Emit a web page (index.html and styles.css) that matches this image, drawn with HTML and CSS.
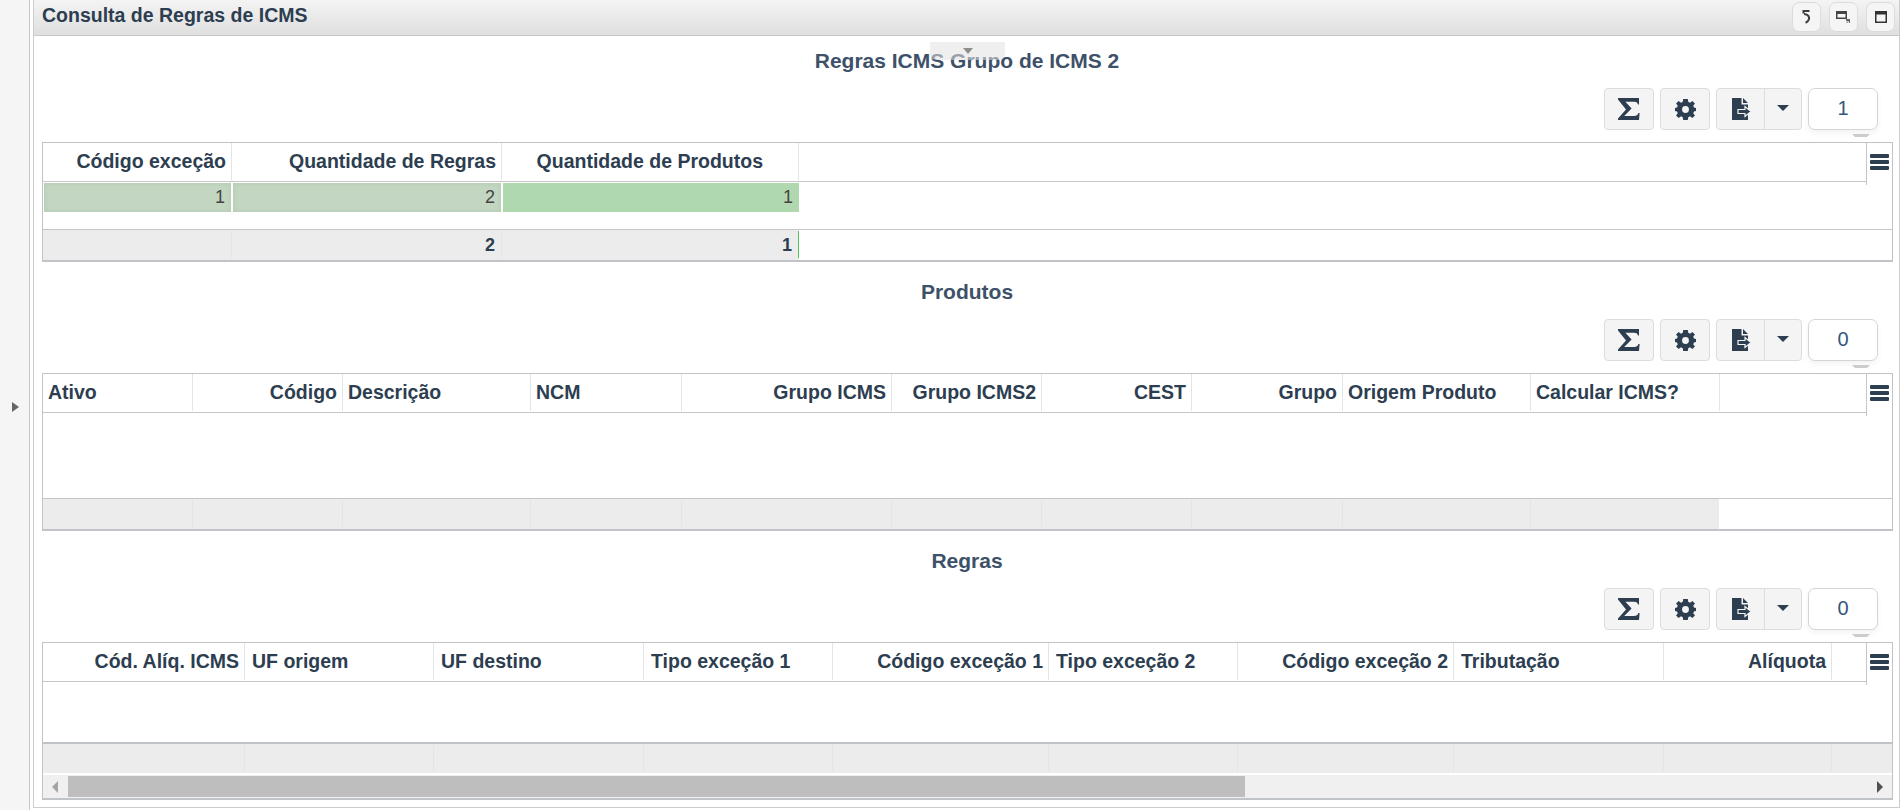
FILE: index.html
```html
<!DOCTYPE html>
<html lang="pt-BR">
<head>
<meta charset="utf-8">
<title>Consulta de Regras de ICMS</title>
<link rel="stylesheet" href="styles.css">
</head>
<body>
<svg class="defs" width="0" height="0" aria-hidden="true">
  <symbol id="i-sigma" viewBox="0 0 22 22"><path d="M0 0H21V6.5H20C19.4 4.4 18.4 3.8 16 3.8H7.4L13.6 10.4L6.2 18H16.2C18.6 18 19.6 17.2 20.4 15H21.6L21 22H0V20.4L8 11.6L0 1.6Z"/></symbol>
  <symbol id="i-gear" viewBox="0 0 22 22"><path fill-rule="evenodd" d="M8.6 0H13.4L13.9 3L15.7 3.8L18.2 2L20.9 4.8L19.1 7.2L19.9 9L22 9.4V12.6L19.9 13L19.1 14.8L20.9 17.2L18.2 20L15.7 18.2L13.9 19L13.4 22H8.6L8.1 19L6.3 18.2L3.8 20L1.1 17.2L2.9 14.8L2.1 13L0 12.6V9.4L2.1 9L2.9 7.2L1.1 4.8L3.8 2L6.3 3.8L8.1 3ZM11 7.4A3.6 3.6 0 1 0 11 14.6A3.6 3.6 0 1 0 11 7.4Z"/></symbol>
  <symbol id="i-export" viewBox="0 0 20 22"><path d="M0 0H9.5V6.5H16V22H0ZM11 0L16 5H11Z"/><path d="M6 11.5H13V8.5L19 13.5L13 18.5V15.5H6Z" stroke="#f4f4f4" stroke-width="1.2"/></symbol>
  <symbol id="i-caret" viewBox="0 0 12 6"><path d="M0 0H12L6 6Z"/></symbol>
  <symbol id="i-menu" viewBox="0 0 19 16"><path d="M1 0H18Q19 0 19 1V3Q19 4 18 4H1Q0 4 0 3V1Q0 0 1 0ZM1 6H18Q19 6 19 7V9Q19 10 18 10H1Q0 10 0 9V7Q0 6 1 6ZM1 12H18Q19 12 19 13V15Q19 16 18 16H1Q0 16 0 15V13Q0 12 1 12Z"/></symbol>
</svg>

<aside class="rail"><span class="rail-arrow"></span></aside>

<main class="panel">
  <header class="panel-head">
    <h1 class="panel-title">Consulta de Regras de ICMS</h1>
    <div class="win-btns">
      <button class="win-btn" aria-label="Voltar">
        <svg width="9" height="14" viewBox="0 0 9 14"><path d="M7.5 1H1.5V3.5M2 4C6.6 4 8 7.6 6.6 10C5.9 11.2 5 12.2 3.5 12.8" fill="none" stroke="#3c3c3c" stroke-width="2"/></svg>
      </button>
      <button class="win-btn" aria-label="Restaurar">
        <svg width="15" height="13" viewBox="0 0 15 13"><path d="M0 0H11V8H0ZM1.5 3V6.5H9.5V3Z" fill-rule="evenodd" fill="#444"/><path d="M10 8H14V12H13V10L11 12H10L12 10H10Z" fill="#666"/></svg>
      </button>
      <button class="win-btn" aria-label="Maximizar">
        <svg width="12" height="12" viewBox="0 0 12 12"><path d="M0 0H12V12H0ZM1.5 3.5V10.5H10.5V3.5Z" fill-rule="evenodd" fill="#333"/></svg>
      </button>
    </div>
  </header>

  <div class="panel-tab"><span class="panel-tab-caret"></span></div>

  <section class="section">
    <h2 class="section-title">Regras ICMS Grupo de ICMS 2</h2>
    <div class="toolbar">
      <button class="tool"><svg class="ico ico-sigma"><use href="#i-sigma"/></svg></button>
      <button class="tool"><svg class="ico ico-gear"><use href="#i-gear"/></svg></button>
      <div class="split">
        <button class="split-main"><svg class="ico ico-export"><use href="#i-export"/></svg></button>
        <button class="split-caret"><svg class="ico ico-caret"><use href="#i-caret"/></svg></button>
      </div>
      <div class="count">1<span class="count-notch"></span></div>
    </div>
    <div class="grid">
      <div class="row head cols-a">
        <div class="cell num">Código exceção</div>
        <div class="cell num">Quantidade de Regras</div>
        <div class="cell num cell-sorted">Quantidade de Produtos</div>
        <div class="cell"></div>
      </div>
      <div class="menu"><svg class="ico ico-menu"><use href="#i-menu"/></svg></div>
      <div class="body body-a">
        <div class="row data cols-a">
          <div class="bar bar-muted">1</div>
          <div class="bar bar-muted">2</div>
          <div class="bar bar-green">1</div>
        </div>
      </div>
      <div class="row foot foot-open cols-a">
        <div class="cell num"></div>
        <div class="cell num">2</div>
        <div class="cell num foot-mark">1</div>
      </div>
    </div>
  </section>

  <section class="section">
    <h2 class="section-title">Produtos</h2>
    <div class="toolbar">
      <button class="tool"><svg class="ico ico-sigma"><use href="#i-sigma"/></svg></button>
      <button class="tool"><svg class="ico ico-gear"><use href="#i-gear"/></svg></button>
      <div class="split">
        <button class="split-main"><svg class="ico ico-export"><use href="#i-export"/></svg></button>
        <button class="split-caret"><svg class="ico ico-caret"><use href="#i-caret"/></svg></button>
      </div>
      <div class="count">0<span class="count-notch"></span></div>
    </div>
    <div class="grid">
      <div class="row head cols-b">
        <div class="cell">Ativo</div>
        <div class="cell num">Código</div>
        <div class="cell">Descrição</div>
        <div class="cell">NCM</div>
        <div class="cell num">Grupo ICMS</div>
        <div class="cell num">Grupo ICMS2</div>
        <div class="cell num">CEST</div>
        <div class="cell num">Grupo</div>
        <div class="cell">Origem Produto</div>
        <div class="cell">Calcular ICMS?</div>
        <div class="cell"></div>
      </div>
      <div class="menu"><svg class="ico ico-menu"><use href="#i-menu"/></svg></div>
      <div class="body body-b"></div>
      <div class="row foot foot-open cols-b">
        <div class="cell"></div><div class="cell"></div><div class="cell"></div>
        <div class="cell"></div><div class="cell"></div><div class="cell"></div>
        <div class="cell"></div><div class="cell"></div><div class="cell"></div>
        <div class="cell"></div>
      </div>
    </div>
  </section>

  <section class="section">
    <h2 class="section-title">Regras</h2>
    <div class="toolbar">
      <button class="tool"><svg class="ico ico-sigma"><use href="#i-sigma"/></svg></button>
      <button class="tool"><svg class="ico ico-gear"><use href="#i-gear"/></svg></button>
      <div class="split">
        <button class="split-main"><svg class="ico ico-export"><use href="#i-export"/></svg></button>
        <button class="split-caret"><svg class="ico ico-caret"><use href="#i-caret"/></svg></button>
      </div>
      <div class="count">0<span class="count-notch"></span></div>
    </div>
    <div class="grid">
      <div class="row head cols-c">
        <div class="cell num">Cód. Alíq. ICMS</div>
        <div class="cell">UF origem</div>
        <div class="cell">UF destino</div>
        <div class="cell">Tipo exceção 1</div>
        <div class="cell num">Código exceção 1</div>
        <div class="cell">Tipo exceção 2</div>
        <div class="cell num">Código exceção 2</div>
        <div class="cell">Tributação</div>
        <div class="cell num">Alíquota</div>
        <div class="cell"></div>
      </div>
      <div class="menu"><svg class="ico ico-menu"><use href="#i-menu"/></svg></div>
      <div class="body body-c"></div>
      <div class="row foot cols-c">
        <div class="cell"></div><div class="cell"></div><div class="cell"></div>
        <div class="cell"></div><div class="cell"></div><div class="cell"></div>
        <div class="cell"></div><div class="cell"></div><div class="cell"></div>
        <div class="cell"></div>
      </div>
      <div class="hscroll">
        <span class="hs-left"></span>
        <span class="hs-thumb"></span>
        <span class="hs-right"></span>
      </div>
    </div>
  </section>
</main>
</body>
</html>
```

FILE: styles.css
```css
* { box-sizing: border-box; }

html, body {
  margin: 0;
  height: 810px;
  overflow: hidden;
}

body {
  display: flex;
  background: #fff;
  font-family: "Liberation Sans", Arial, sans-serif;
  color: #2c3e50;
}

.defs { position: absolute; }

.rail {
  width: 30px;
  flex: none;
  background: #f5f5f5;
  border-right: 1px solid #c8c8c8;
  position: relative;
}

.rail-arrow {
  position: absolute;
  left: 12px;
  top: 402px;
  border-left: 7px solid #666;
  border-top: 5px solid transparent;
  border-bottom: 5px solid transparent;
}

.panel {
  position: relative;
  flex: none;
  width: 1867px;
  height: 808px;
  margin-left: 3px;
  border: 1px solid #ccc;
  border-top: 0;
}

.panel-head {
  height: 36px;
  display: flex;
  align-items: flex-start;
  justify-content: space-between;
  padding: 2px 4px 0 8px;
  background: linear-gradient(#f5f4f5, #dfdfdf);
  border-bottom: 1px solid #c8c8c8;
}

.panel-title {
  margin: 0;
  font-size: 19.5px;
  line-height: 26px;
  font-weight: 700;
  color: #2c3e50;
}

.win-btns { display: flex; gap: 8px; }

.win-btn {
  width: 29px;
  height: 30px;
  padding: 0;
  display: flex;
  align-items: center;
  justify-content: center;
  background: #f5f5f5;
  border: 1px solid #dcdcdc;
  border-radius: 7px;
}

.panel-tab {
  position: absolute;
  left: 896px;
  top: 42px;
  width: 75px;
  height: 18px;
  background: rgba(225, 225, 225, .55);
  border-radius: 0 0 6px 6px;
  display: flex;
  justify-content: center;
  padding-top: 6px;
}

.panel-tab-caret {
  width: 0;
  height: 0;
  border-top: 6px solid #8e8e8e;
  border-left: 5px solid transparent;
  border-right: 5px solid transparent;
}

.section { padding: 0 7px 5px 8px; }

.section-title {
  margin: 0;
  height: 52px;
  padding-bottom: 2px;
  display: flex;
  align-items: center;
  justify-content: center;
  font-size: 21px;
  font-weight: 700;
  color: #3d5168;
}

.toolbar {
  height: 42px;
  display: flex;
  justify-content: flex-end;
  gap: 6px;
  padding-right: 14px;
  margin-bottom: 12px;
}

.tool, .split {
  height: 42px;
  background: #f4f4f4;
  border: 1px solid #dcdcdc;
  border-radius: 4px;
}

.tool {
  width: 50px;
  padding: 0;
  display: flex;
  align-items: center;
  justify-content: center;
}

.split { display: flex; width: 86px; }

.split-main, .split-caret {
  padding: 0;
  border: 0;
  background: none;
  display: flex;
  align-items: center;
  justify-content: center;
}

.split-main { width: 48px; border-right: 1px solid #dcdcdc; }
.split-caret { flex: 1; }

.ico { fill: #2c3e50; display: block; }
.ico-sigma { width: 22px; height: 22px; }
.ico-gear { width: 21px; height: 21px; }
.ico-export { width: 20px; height: 22px; margin-left: 2px; }
.ico-caret { width: 12px; height: 6px; margin-top: -2px; }
.ico-menu { width: 19px; height: 16px; }

.count {
  position: relative;
  width: 70px;
  height: 42px;
  background: #fff;
  border: 1px solid #d5d5d5;
  border-radius: 7px;
  box-shadow: 0 3px 6px rgba(0, 0, 0, .05);
  display: flex;
  align-items: center;
  justify-content: center;
  font-size: 20px;
  color: #34577a;
  padding-bottom: 2px;
}

.count-notch {
  position: absolute;
  left: 43px;
  top: 45px;
  width: 18px;
  height: 0;
  border-top: 3px solid #ccc;
  border-left: 3px solid transparent;
  border-right: 3px solid transparent;
}

.grid {
  position: relative;
  border: 1px solid #c0c4c8;
  border-bottom: 2px solid #c0c4c8;
  width: 1851px;
}

.row { display: grid; }

.cols-a { grid-template-columns: 189px 270px 297px 1fr; }
.cols-b { grid-template-columns: 150px 150px 188px 151px 210px 150px 150px 151px 188px 189px 1fr; }
.cols-c { grid-template-columns: 202px 189px 210px 189px 216px 189px 216px 210px 168px 1fr; }

.head {
  height: 39px;
  border-bottom: 1px solid #c6c6c6;
  font-size: 19.5px;
  font-weight: 700;
  line-height: 37px;
}

.cell {
  padding: 0 5px;
  white-space: nowrap;
  overflow: hidden;
  border-right: 1px solid #e1e4e8;
  margin-bottom: 1px;
}

.cols-c .cell { padding-left: 7px; }

.cell-sorted { padding-right: 35px; }

.num { text-align: right; }

.menu {
  position: absolute;
  right: 0;
  top: 0;
  width: 26px;
  height: 42px;
  padding: 11px 0 0 3px;
  background: #fff;
  border-left: 1px solid #c6c6c6;
}

.body-a { height: 47px; padding-top: 1px; }
.body-b { height: 85px; }
.body-c { height: 60px; }

.data { height: 28px; }

.bar {
  padding: 0 6px 0 0;
  margin-left: 1px;
  margin-right: 1px;
  text-align: right;
  font-size: 18px;
  line-height: 29px;
  color: #444;
}

.bar-muted {
  background: #c3d6c1;
  box-shadow: inset 0 0 5px #b0c9ae;
}

.bar-green { background: #b0d8af; margin-right: 0; }

.foot {
  height: 31px;
  border-top: 2px solid #c0c4c8;
  background: #ececec;
  font-size: 18px;
  font-weight: 700;
  line-height: 29px;
}

.foot .cell { margin-bottom: 2px; margin-top: 1px; padding-right: 6px; }

.foot-open {
  background: linear-gradient(#ececec, #ececec) no-repeat left / 756px 100%;
  border-top: 1px solid #c6c6c6;
}

.cols-b.foot-open { background-size: 1676px 100%; }

.foot-mark { border-right-color: #53c653; }

.foot .cell:last-child:empty { border-right: 0; }

.hscroll {
  height: 25px;
  display: flex;
  align-items: center;
  background: #f0f0f0;
  border-top: 2px solid #fff;
  position: relative;
}

.hs-left {
  margin-left: 9px;
  border-right: 6px solid #a4a4a4;
  border-top: 6px solid transparent;
  border-bottom: 6px solid transparent;
}

.hs-thumb {
  margin-left: 10px;
  width: 1177px;
  height: 21px;
  background: #bebebe;
}

.hs-right {
  margin-left: auto;
  margin-right: 9px;
  border-left: 6px solid #505050;
  border-top: 6px solid transparent;
  border-bottom: 6px solid transparent;
}
```
